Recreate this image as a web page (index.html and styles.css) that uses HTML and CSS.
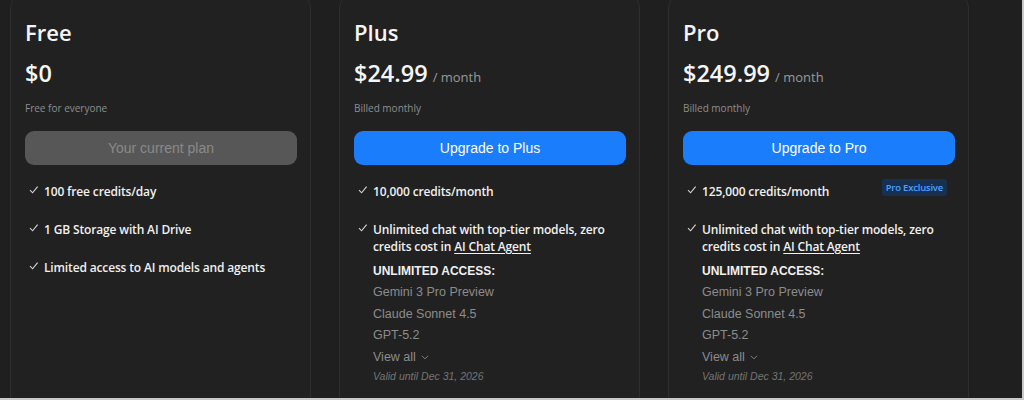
FILE: index.html
```html
<!DOCTYPE html>
<html>
<head>
<meta charset="utf-8">
<link rel="stylesheet" href="styles.css">
</head>
<body>
<div class="frame">
  <div class="cards">
    <section class="card">
      <h2 class="title">Free</h2>
      <div class="price"><span class="amount">$0</span></div>
      <p class="note">Free for everyone</p>
      <button class="btn btn-current">Your current plan</button>
      <ul class="features">
        <li class="feat"><svg class="check" width="15" height="12" viewBox="0 0 15 12"><path d="M1 6.2 L3.6 8.8 L8.6 2.6" fill="none" stroke="#d6d6d6" stroke-width="1.1"/></svg><span class="ftext">100 free credits/day</span></li>
        <li class="feat"><svg class="check" width="15" height="12" viewBox="0 0 15 12"><path d="M1 6.2 L3.6 8.8 L8.6 2.6" fill="none" stroke="#d6d6d6" stroke-width="1.1"/></svg><span class="ftext">1 GB Storage with AI Drive</span></li>
        <li class="feat"><svg class="check" width="15" height="12" viewBox="0 0 15 12"><path d="M1 6.2 L3.6 8.8 L8.6 2.6" fill="none" stroke="#d6d6d6" stroke-width="1.1"/></svg><span class="ftext">Limited access to AI models and agents</span></li>
      </ul>
    </section>
    <section class="card">
      <h2 class="title">Plus</h2>
      <div class="price"><span class="amount">$24.99</span><span class="per">/ month</span></div>
      <p class="note">Billed monthly</p>
      <button class="btn btn-primary">Upgrade to Plus</button>
      <ul class="features">
        <li class="feat"><svg class="check" width="15" height="12" viewBox="0 0 15 12"><path d="M1 6.2 L3.6 8.8 L8.6 2.6" fill="none" stroke="#d6d6d6" stroke-width="1.1"/></svg><span class="ftext">10,000 credits/month</span></li>
        <li class="feat"><svg class="check" width="15" height="12" viewBox="0 0 15 12"><path d="M1 6.2 L3.6 8.8 L8.6 2.6" fill="none" stroke="#d6d6d6" stroke-width="1.1"/></svg>
          <div class="fbody">
            <p class="ftext">Unlimited chat with top-tier models, zero credits cost in <span class="link">AI Chat Agent</span></p>
            <div class="access">UNLIMITED ACCESS:</div>
            <div class="model">Gemini 3 Pro Preview</div>
            <div class="model">Claude Sonnet 4.5</div>
            <div class="model">GPT-5.2</div>
            <div class="model viewall">View all <svg class="chev" width="8" height="5" viewBox="0 0 8 5"><path d="M0.8 0.8 L4 3.8 L7.2 0.8" fill="none" stroke="#7a7a7a" stroke-width="1"/></svg></div>
            <div class="valid">Valid until Dec 31, 2026</div>
          </div>
        </li>
      </ul>
    </section>
    <section class="card">
      <h2 class="title">Pro</h2>
      <div class="price"><span class="amount">$249.99</span><span class="per">/ month</span></div>
      <p class="note">Billed monthly</p>
      <button class="btn btn-primary">Upgrade to Pro</button>
      <ul class="features">
        <li class="feat"><svg class="check" width="15" height="12" viewBox="0 0 15 12"><path d="M1 6.2 L3.6 8.8 L8.6 2.6" fill="none" stroke="#d6d6d6" stroke-width="1.1"/></svg><span class="ftext grow">125,000 credits/month</span><span class="badge">Pro Exclusive</span></li>
        <li class="feat"><svg class="check" width="15" height="12" viewBox="0 0 15 12"><path d="M1 6.2 L3.6 8.8 L8.6 2.6" fill="none" stroke="#d6d6d6" stroke-width="1.1"/></svg>
          <div class="fbody">
            <p class="ftext">Unlimited chat with top-tier models, zero credits cost in <span class="link">AI Chat Agent</span></p>
            <div class="access">UNLIMITED ACCESS:</div>
            <div class="model">Gemini 3 Pro Preview</div>
            <div class="model">Claude Sonnet 4.5</div>
            <div class="model">GPT-5.2</div>
            <div class="model viewall">View all <svg class="chev" width="8" height="5" viewBox="0 0 8 5"><path d="M0.8 0.8 L4 3.8 L7.2 0.8" fill="none" stroke="#7a7a7a" stroke-width="1"/></svg></div>
            <div class="valid">Valid until Dec 31, 2026</div>
          </div>
        </li>
      </ul>
    </section>
  </div>
</div>
</body>
</html>
```
FILE: styles.css
```css
* { box-sizing: border-box; }
html, body { margin: 0; padding: 0; }
body {
  background: #c9c9c9;
  font-family: "Open Sans", "Noto Sans", sans-serif;
  color: #f2f2f2;
}
.frame {
  width: 1022px;
  height: 398px;
  background: #1f1f1f;
  overflow: hidden;
}
.cards {
  display: flex;
  gap: 28px;
  padding-left: 10px;
  margin-top: -8px;
}
.card {
  width: 301px;
  height: 440px;
  flex: none;
  background: #212121;
  border: 1px solid #2e2e2e;
  border-radius: 16px;
  padding: 24px 14px 0 14px;
}
.title {
  margin: 0;
  font-size: 22px;
  font-weight: 600;
  line-height: 30px;
  color: #f5f5f5;
}
.price {
  margin-top: 10px;
  display: flex;
  align-items: baseline;
  gap: 5px;
  height: 32px;
}
.amount {
  font-size: 23.5px;
  font-weight: 600;
  line-height: 32px;
  color: #f5f5f5;
}
.per {
  font-size: 13px;
  color: #9a9a9a;
}
.note {
  margin: 12px 0 0 0;
  font-size: 10px;
  line-height: 14px;
  color: #8e8e8e;
}
.btn {
  display: block;
  width: 272px;
  height: 34px;
  margin-top: 16px;
  border: none;
  border-radius: 9px;
  font-family: "Liberation Sans", Arial, sans-serif;
  font-size: 14px;
}
.btn-current { background: #575757; color: #8a8a8a; }
.btn-primary { background: #1a7dfc; color: #ffffff; }
.features {
  list-style: none;
  margin: 18px 0 0 0;
  padding: 0 0 0 4px;
  display: flex;
  flex-direction: column;
  gap: 21px;
}
.feat {
  display: flex;
  align-items: flex-start;
  font-size: 12px;
  line-height: 17px;
  font-weight: 600;
  letter-spacing: -0.15px;
  color: #f0f0f0;
}
.check {
  flex: none;
  margin-top: 1px;
}
.ftext { margin: 0; }
.link { text-decoration: underline; text-underline-offset: 2px; }
.grow { flex: 1; }
.fbody { display: flex; flex-direction: column; width: 240px; }
.badge {
  margin-top: -4px;
  margin-right: 7px;
  background: #17304f;
  color: #4ba0ff;
  font-size: 9.5px;
  font-weight: 600;
  line-height: 17px;
  letter-spacing: -0.2px;
  padding: 0 4px;
  border-radius: 3px;
}
.access {
  margin-top: 8px;
  font-family: "Liberation Sans", Arial, sans-serif;
  font-weight: 700;
  font-size: 12px;
  line-height: 16px;
  letter-spacing: 0;
  color: #f0f0f0;
}
.model {
  margin-top: 5px;
  font-family: "Liberation Sans", Arial, sans-serif;
  font-weight: 400;
  font-size: 12.5px;
  line-height: 16.5px;
  letter-spacing: 0;
  color: #8c8c8c;
}
.viewall { display: flex; align-items: center; gap: 5px; }
.chev { margin-top: 1px; }
.valid {
  margin-top: 3px;
  font-family: "Liberation Sans", Arial, sans-serif;
  font-style: italic;
  font-weight: 400;
  font-size: 10.5px;
  line-height: 16px;
  letter-spacing: 0;
  color: #757575;
}
```
